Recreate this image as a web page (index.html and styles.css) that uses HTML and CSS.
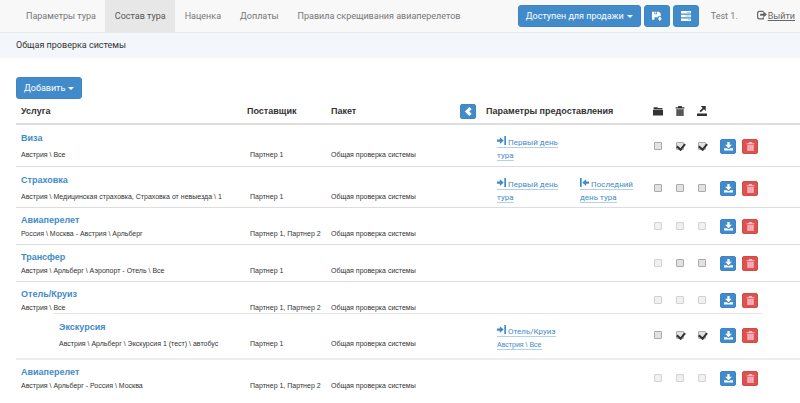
FILE: index.html
```html
<!DOCTYPE html>
<html lang="ru">

<head>
    <meta charset="UTF-8">
    <meta name="viewport" content="width=device-width, initial-scale=1.0">
    <title>Состав тура</title>
    <link rel="stylesheet" href="styles.css">
</head>

<body>
    <!-- Icons -->
    <svg class="sprite" aria-hidden="true">
        <symbol id="i-download" viewBox="0 0 16 16"><path d="M6 0h4v5h4l-6 6-6-6h4zM0 11h5l3 2 3-2h5v4H0z" /></symbol>
        <symbol id="i-trash" viewBox="0 0 16 16"><path d="M5 2V0h6v2h4v2H1V2z" /><path d="M2 5h12v11H2z" opacity=".75" /><path d="M4 6h1v9H4zM7.500 6h1v9h-1zM11 6h1v9h-1z" /></symbol>
        <symbol id="i-left" viewBox="0 0 16 16"><path d="M9.500 0l4 4-4 4 4 4-4 4-8-8z" /></symbol>
        <symbol id="i-folder" viewBox="0 0 16 16"><path d="M1 2h6l1 1h7v2H1zM0 6h16v9H0z" /></symbol>
        <symbol id="i-open" viewBox="0 0 16 16"><path d="M6 0h8v8l-3-3-5 5-2-2 5-5zM0 12h16v4H0z" /></symbol>
        <symbol id="i-start" viewBox="0 0 16 16"><path d="M0 6h5V2l7 6-7 6v-4H0zM13 0h3v16h-3z" /></symbol>
        <symbol id="i-end" viewBox="0 0 16 16"><path d="M16 6h-5V2L4 8l7 6v-4h5zM0 0h3v16H0z" /></symbol>
        <symbol id="i-save" viewBox="0 0 16 16"><path d="M0 1h4v4h4V1h3l3 3v4h-4v2H4v4H0zM5 1h2v3H5zM11 9h3v3h2l-3.500 4L9 12h2z" /></symbol>
        <symbol id="i-tasks" viewBox="0 0 16 16"><path fill-rule="evenodd" d="M0 0h16v4H0zM10 1.500v1h5v-1zM0 6h16v4H0zM7 7.500v1h8v-1zM0 12h16v4H0zM11 13.500v1h4v-1z" /></symbol>
        <symbol id="i-logout" viewBox="0 0 16 16"><path d="M10 1H4Q0 1 0 5v6q0 4 4 4h7v-3H9v1H4q-2 0-2-2V5q0-2 2-2h6zM5 6h5V2l6 5-6 5V9H5z" /></symbol>
    </svg>

    <nav class="navbar">
        <div class="nav-tabs">
            <a href="#">Параметры тура</a>
            <a href="#" class="active">Состав тура</a>
            <a href="#">Наценка</a>
            <a href="#">Доплаты</a>
            <a href="#">Правила скрещивания авиаперелетов</a>
        </div>
        <div class="nav-actions">
            <button type="button" class="btn">Доступен для продажи <span class="caret"></span></button>
            <button type="button" class="btn btn-icon" aria-label="Сохранить"><svg><use href="#i-save" /></svg></button>
            <button type="button" class="btn btn-icon" aria-label="Задачи"><svg><use href="#i-tasks" /></svg></button>
        </div>
        <span class="user">Test 1.</span>
        <a href="#" class="logout"><svg><use href="#i-logout" /></svg>Выйти</a>
    </nav>

    <div class="tour-name">Общая проверка системы</div>

    <main class="content">
        <button type="button" class="btn">Добавить <span class="caret"></span></button>

        <table class="services">
            <colgroup>
                <col>
                <col class="col-supplier">
                <col class="col-package">
                <col class="col-toggle">
                <col class="col-params">
                <col class="col-check">
                <col class="col-check">
                <col class="col-check">
                <col class="col-actions">
            </colgroup>
            <thead>
                <tr>
                    <th>Услуга</th>
                    <th>Поставщик</th>
                    <th>Пакет</th>
                    <th><button type="button" class="btn btn-small" aria-label="Свернуть"><svg><use href="#i-left" /></svg></button></th>
                    <th>Параметры предоставления</th>
                    <th class="check"><svg><use href="#i-folder" /></svg></th>
                    <th class="check"><svg><use href="#i-trash" /></svg></th>
                    <th class="check"><svg><use href="#i-open" /></svg></th>
                    <th></th>
                </tr>
            </thead>
            <tbody>
                <tr class="tall">
                    <td><a href="#" class="title">Виза</a><div class="small">Австрия \ Все</div></td>
                    <td class="text">Партнер 1</td>
                    <td class="text package">Общая проверка системы</td>
                    <td></td>
                    <td class="params"><div class="links"><div><a href="#"><svg><use href="#i-start" /></svg> Первый день тура</a></div></div></td>
                    <td class="check"><input type="checkbox" aria-label="Пакет"></td>
                    <td class="check"><input type="checkbox" aria-label="Удаляемая" checked></td>
                    <td class="check"><input type="checkbox" aria-label="Внешняя" checked></td>
                    <td class="actions"><div><button type="button" class="btn btn-small" aria-label="Загрузить"><svg><use href="#i-download" /></svg></button><button type="button" class="btn btn-small btn-danger" aria-label="Удалить"><svg><use href="#i-trash" /></svg></button></div></td>
                </tr>
                <tr class="tall">
                    <td><a href="#" class="title">Страховка</a><div class="small">Австрия \ Медицинская страховка, Страховка от невыезда \ 1</div></td>
                    <td class="text">Партнер 1</td>
                    <td class="text package">Общая проверка системы</td>
                    <td></td>
                    <td class="params"><div class="links"><div><a href="#"><svg><use href="#i-start" /></svg> Первый день тура</a></div><div><a href="#"><svg><use href="#i-end" /></svg> Последний день тура</a></div></div></td>
                    <td class="check"><input type="checkbox" aria-label="Пакет"></td>
                    <td class="check"><input type="checkbox" aria-label="Удаляемая"></td>
                    <td class="check"><input type="checkbox" aria-label="Внешняя"></td>
                    <td class="actions"><div><button type="button" class="btn btn-small" aria-label="Загрузить"><svg><use href="#i-download" /></svg></button><button type="button" class="btn btn-small btn-danger" aria-label="Удалить"><svg><use href="#i-trash" /></svg></button></div></td>
                </tr>
                <tr>
                    <td><a href="#" class="title">Авиаперелет</a><div class="small">Россия \ Москва - Австрия \ Арльберг</div></td>
                    <td class="text">Партнер 1, Партнер 2</td>
                    <td class="text package">Общая проверка системы</td>
                    <td></td>
                    <td></td>
                    <td class="check"><input type="checkbox" aria-label="Пакет" disabled></td>
                    <td class="check"><input type="checkbox" aria-label="Удаляемая" disabled></td>
                    <td class="check"><input type="checkbox" aria-label="Внешняя" disabled></td>
                    <td class="actions"><div><button type="button" class="btn btn-small" aria-label="Загрузить"><svg><use href="#i-download" /></svg></button><button type="button" class="btn btn-small btn-danger" aria-label="Удалить"><svg><use href="#i-trash" /></svg></button></div></td>
                </tr>
                <tr>
                    <td><a href="#" class="title">Трансфер</a><div class="small">Австрия \ Арльберг \ Аэропорт - Отель \ Все</div></td>
                    <td class="text">Партнер 1</td>
                    <td class="text package">Общая проверка системы</td>
                    <td></td>
                    <td></td>
                    <td class="check"><input type="checkbox" aria-label="Пакет" disabled></td>
                    <td class="check"><input type="checkbox" aria-label="Удаляемая"></td>
                    <td class="check"><input type="checkbox" aria-label="Внешняя"></td>
                    <td class="actions"><div><button type="button" class="btn btn-small" aria-label="Загрузить"><svg><use href="#i-download" /></svg></button><button type="button" class="btn btn-small btn-danger" aria-label="Удалить"><svg><use href="#i-trash" /></svg></button></div></td>
                </tr>
                <tr class="parent">
                    <td><a href="#" class="title">Отель/Круиз</a><div class="small">Австрия \ Все</div></td>
                    <td class="text">Партнер 1, Партнер 2</td>
                    <td class="text package">Общая проверка системы</td>
                    <td></td>
                    <td></td>
                    <td class="check"><input type="checkbox" aria-label="Пакет" disabled></td>
                    <td class="check"><input type="checkbox" aria-label="Удаляемая" disabled></td>
                    <td class="check"><input type="checkbox" aria-label="Внешняя" disabled></td>
                    <td class="actions"><div><button type="button" class="btn btn-small" aria-label="Загрузить"><svg><use href="#i-download" /></svg></button><button type="button" class="btn btn-small btn-danger" aria-label="Удалить"><svg><use href="#i-trash" /></svg></button></div></td>
                </tr>
                <tr class="tall nested">
                    <td><div class="nested-service"><a href="#" class="title">Экскурсия</a><div class="small">Австрия \ Арльберг \ Экскурсия 1 (тест) \ автобус</div></div></td>
                    <td class="text">Партнер 1</td>
                    <td class="text package">Общая проверка системы</td>
                    <td></td>
                    <td class="params"><div class="links"><div><a href="#"><svg><use href="#i-start" /></svg> Отель/Круиз<br><span class="small">Австрия \ Все</span></a></div></div></td>
                    <td class="check"><input type="checkbox" aria-label="Пакет"></td>
                    <td class="check"><input type="checkbox" aria-label="Удаляемая" checked></td>
                    <td class="check"><input type="checkbox" aria-label="Внешняя" checked></td>
                    <td class="actions"><div class="nested-actions"><button type="button" class="btn btn-small" aria-label="Загрузить"><svg><use href="#i-download" /></svg></button><button type="button" class="btn btn-small btn-danger" aria-label="Удалить"><svg><use href="#i-trash" /></svg></button></div></td>
                </tr>
                <tr class="after-nested">
                    <td><a href="#" class="title">Авиаперелет</a><div class="small">Австрия \ Арльберг - Россия \ Москва</div></td>
                    <td class="text">Партнер 1, Партнер 2</td>
                    <td class="text package">Общая проверка системы</td>
                    <td></td>
                    <td></td>
                    <td class="check"><input type="checkbox" aria-label="Пакет" disabled></td>
                    <td class="check"><input type="checkbox" aria-label="Удаляемая" disabled></td>
                    <td class="check"><input type="checkbox" aria-label="Внешняя" disabled></td>
                    <td class="actions"><div><button type="button" class="btn btn-small" aria-label="Загрузить"><svg><use href="#i-download" /></svg></button><button type="button" class="btn btn-small btn-danger" aria-label="Удалить"><svg><use href="#i-trash" /></svg></button></div></td>
                </tr>
            </tbody>
        </table>
    </main>
</body>

</html>
```

FILE: styles.css
```css
* {
    box-sizing: border-box;
}

body {
    margin: 0;
    background-color: #fff;
    color: #333;
    font-family: Roboto, "Liberation Sans", sans-serif;
    font-size: 9px;
    line-height: 13px;
}

a {
    color: #428bca;
    text-decoration: none;
}

svg {
    width: 10px;
    height: 10px;
    fill: currentColor;
}

.sprite {
    display: none;
}

/* Top bar */
.navbar {
    display: flex;
    align-items: center;
    height: 33px;
    padding: 0 5px 0 16px;
    background-color: #f8f8f8;
    border-bottom: 1px solid #e7eceb;
    color: #777;
    white-space: nowrap;
}

.nav-tabs {
    display: flex;
    margin-right: auto;
}

.nav-tabs a {
    padding: 10px 9px 9px 10px;
    color: #777;
}

.nav-tabs .active {
    background-color: #e7e7e7;
    color: #555;
}

.nav-actions {
    display: flex;
    gap: 3px;
}

.user {
    margin: 0 19px 0 12px;
}

.logout {
    color: #666;
    text-decoration: underline;
}

.logout svg {
    margin-right: 1px;
    vertical-align: -1px;
}

/* Buttons */
.btn {
    display: inline-flex;
    align-items: center;
    justify-content: center;
    height: 22px;
    padding: 0 7px;
    border: 1px solid #3d86c6;
    border-radius: 3px;
    background-color: #428bca;
    color: #fff;
    font: inherit;
    cursor: pointer;
}

.btn-icon {
    width: 26px;
    padding: 0;
}

.btn-small {
    width: 16px;
    height: 15px;
    padding: 0;
    border-radius: 2px;
}

.btn-small svg {
    width: 9px;
    height: 9px;
}

.btn-danger {
    border-color: #d64a46;
    background-color: #d9534f;
    color: #fbc;
}

.caret {
    margin-left: 3px;
    border: 3px solid transparent;
    border-top-color: currentColor;
    border-bottom: 0;
}

.tour-name {
    padding: 6px 16px;
    background-color: #f3f7fb;
}

.content {
    padding: 19px 0 0 16px;
}

/* Services table */
.services {
    width: 100%;
    border-collapse: separate;
    border-spacing: 0;
    table-layout: fixed;
}

.col-supplier {
    width: 84px;
}

.col-package {
    width: 129px;
}

.col-toggle {
    width: 26px;
}

.col-params {
    width: 166px;
}

.col-check {
    width: 22px;
}

.col-actions {
    width: 87px;
}

.services th {
    height: 26px;
    padding: 0 5px;
    border-bottom: 2px solid #ddd;
    font-family: "Liberation Sans", Arial, sans-serif;
    text-align: left;
    vertical-align: middle;
    white-space: nowrap;
}

.services th .btn,
.services th svg {
    vertical-align: middle;
}

.services td {
    height: 37px;
    padding: 4px 5px 0;
    border-bottom: 1px solid #ddd;
    vertical-align: top;
}

.services .check {
    padding-left: 0;
    padding-right: 0;
    text-align: center;
}

.services td.check {
    padding-top: 14px;
    line-height: 8px;
}

.title {
    display: block;
    margin-bottom: 1px;
    font: bold 9px/16px "Liberation Sans", Arial, sans-serif;
}

.small,
.services .text {
    font: 7px/10px "Liberation Sans", Arial, sans-serif;
    white-space: nowrap;
}

.services .text {
    padding: 21px 0 0 8px;
}

.services .package {
    padding-left: 5px;
}

.links {
    display: flex;
    gap: 18px;
    padding-left: 11px;
    font-size: 8px;
}

.links > div {
    width: 65px;
}

.links svg {
    width: 9px;
    height: 9px;
}

.links a {
    border-bottom: 1px solid #b3d1ea;
}

.services .actions {
    padding: 11px 0 0 7px;
}

.actions > div {
    display: flex;
    gap: 6px;
}

.services .tall td {
    height: 41px;
    padding-top: 5px;
}

.services .tall:first-child td {
    height: 42px;
}

.tall .title {
    margin-bottom: 4px;
}

.services .tall .text {
    padding-top: 25px;
}

.services .tall .params {
    padding-top: 11px;
    padding-right: 0;
}

.services .tall .check {
    padding-top: 17px;
}

.services .tall .actions {
    padding-top: 14px;
}

.services .parent td {
    height: 31px;
    border-bottom: 0;
}

.services .nested td {
    height: 47px;
    border-top: 1px solid #e4e4e4;
    border-bottom: 2px solid #eee;
}

/* The inner line starts at the indent and stops before the edge */
.services .nested td:first-child,
.services .nested td:last-child {
    padding: 0;
    border-top: 0;
}

.nested-service {
    margin-left: 38px;
    padding: 5px 5px 0;
    border-top: 1px solid #e4e4e4;
}

.services .nested-actions {
    width: 49px;
    padding: 14px 0 0 7px;
    border-top: 1px solid #e4e4e4;
}

.services .nested .actions {
    padding-top: 0;
}

.services .after-nested td {
    border-bottom: 0;
}

/* Checkboxes */
input[type="checkbox"] {
    appearance: none;
    width: 8px;
    height: 8px;
    margin: 0;
    border: 1px solid #aaa;
    border-radius: 1px;
    background-color: #e2e2e2;
}

input[type="checkbox"]:disabled {
    border-color: #d2d2d2;
    background-color: #f0f0f0;
}

input[type="checkbox"]:checked::before {
    content: "";
    display: block;
    width: 4px;
    height: 6px;
    margin: -1px 0 0 1px;
    border: solid #333;
    border-width: 0 2px 2px 0;
    transform: rotate(40deg);
}
```
